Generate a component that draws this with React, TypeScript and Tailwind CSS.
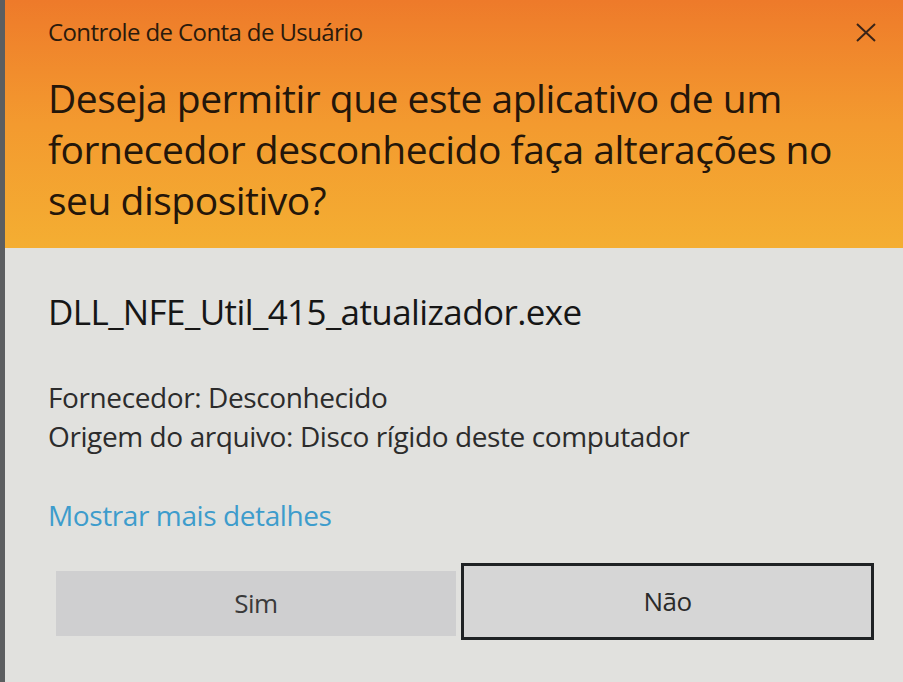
export default function App() {
  return (
    <div
      className="w-[903px] h-[682px] flex bg-[#e1e1de] overflow-hidden"
      style={{ fontFamily: '"Open Sans", "Noto Sans", sans-serif' }}
    >
      {/* left window edge */}
      <div className="w-[5px] shrink-0 bg-[#5c5e60]" />

      <div className="flex-1 flex flex-col">
        {/* Orange header */}
        <div className="h-[248px] shrink-0 bg-linear-to-b from-[#ee7a2a] via-[#f39a2f] to-[#f4ae32] pl-[43px] pr-[22px] pt-[16px]">
          <div className="flex items-center justify-between h-[32px]">
            <span className="text-[24px] tracking-[-0.6px] text-[#2a1a0c]">
              Controle de Conta de Usuário
            </span>
            <svg width="22" height="22" viewBox="0 0 22 22" className="mr-[4px]">
              <path d="M2 3 L20 20 M20 3 L2 20" stroke="#3a2418" strokeWidth="2" />
            </svg>
          </div>
          <p className="mt-[24px] text-[39px] leading-[51px] tracking-[-0.5px] text-[#24160a] whitespace-nowrap">
            Deseja permitir que este aplicativo de um
            <br />
            fornecedor desconhecido faça alterações no
            <br />
            seu dispositivo?
          </p>
        </div>

        {/* Body */}
        <div className="flex-1 flex flex-col pl-[43px] pr-[26px]">
          <p className="mt-[44px] text-[35px] leading-[40px] tracking-[-0.6px] text-[#161616]">
            DLL_NFE_Util_415_atualizador.exe
          </p>
          <div className="mt-[46px] text-[28px] leading-[39px] tracking-[-0.4px] text-[#2c2c2c]">
            <p>Fornecedor: Desconhecido</p>
            <p>Origem do arquivo: Disco rígido deste computador</p>
          </div>
          <p className="mt-[39px] text-[28px] leading-[40px] tracking-[-0.4px] text-[#3d9ccc]">
            Mostrar mais detalhes
          </p>
          <div className="mt-[28px] flex items-start gap-[5px]">
            <button className="mt-[8px] w-[400px] h-[65px] ml-[8px] bg-[#cfcfd0] text-[26px] text-[#3a3a3a] tracking-[-0.5px]">
              Sim
            </button>
            <button className="w-[413px] h-[77px] bg-[#d6d6d6] border-[3px] border-[#1f2224] text-[26px] text-[#2a2a2a] tracking-[-0.5px]">
              Não
            </button>
          </div>
        </div>
      </div>
    </div>
  );
}
